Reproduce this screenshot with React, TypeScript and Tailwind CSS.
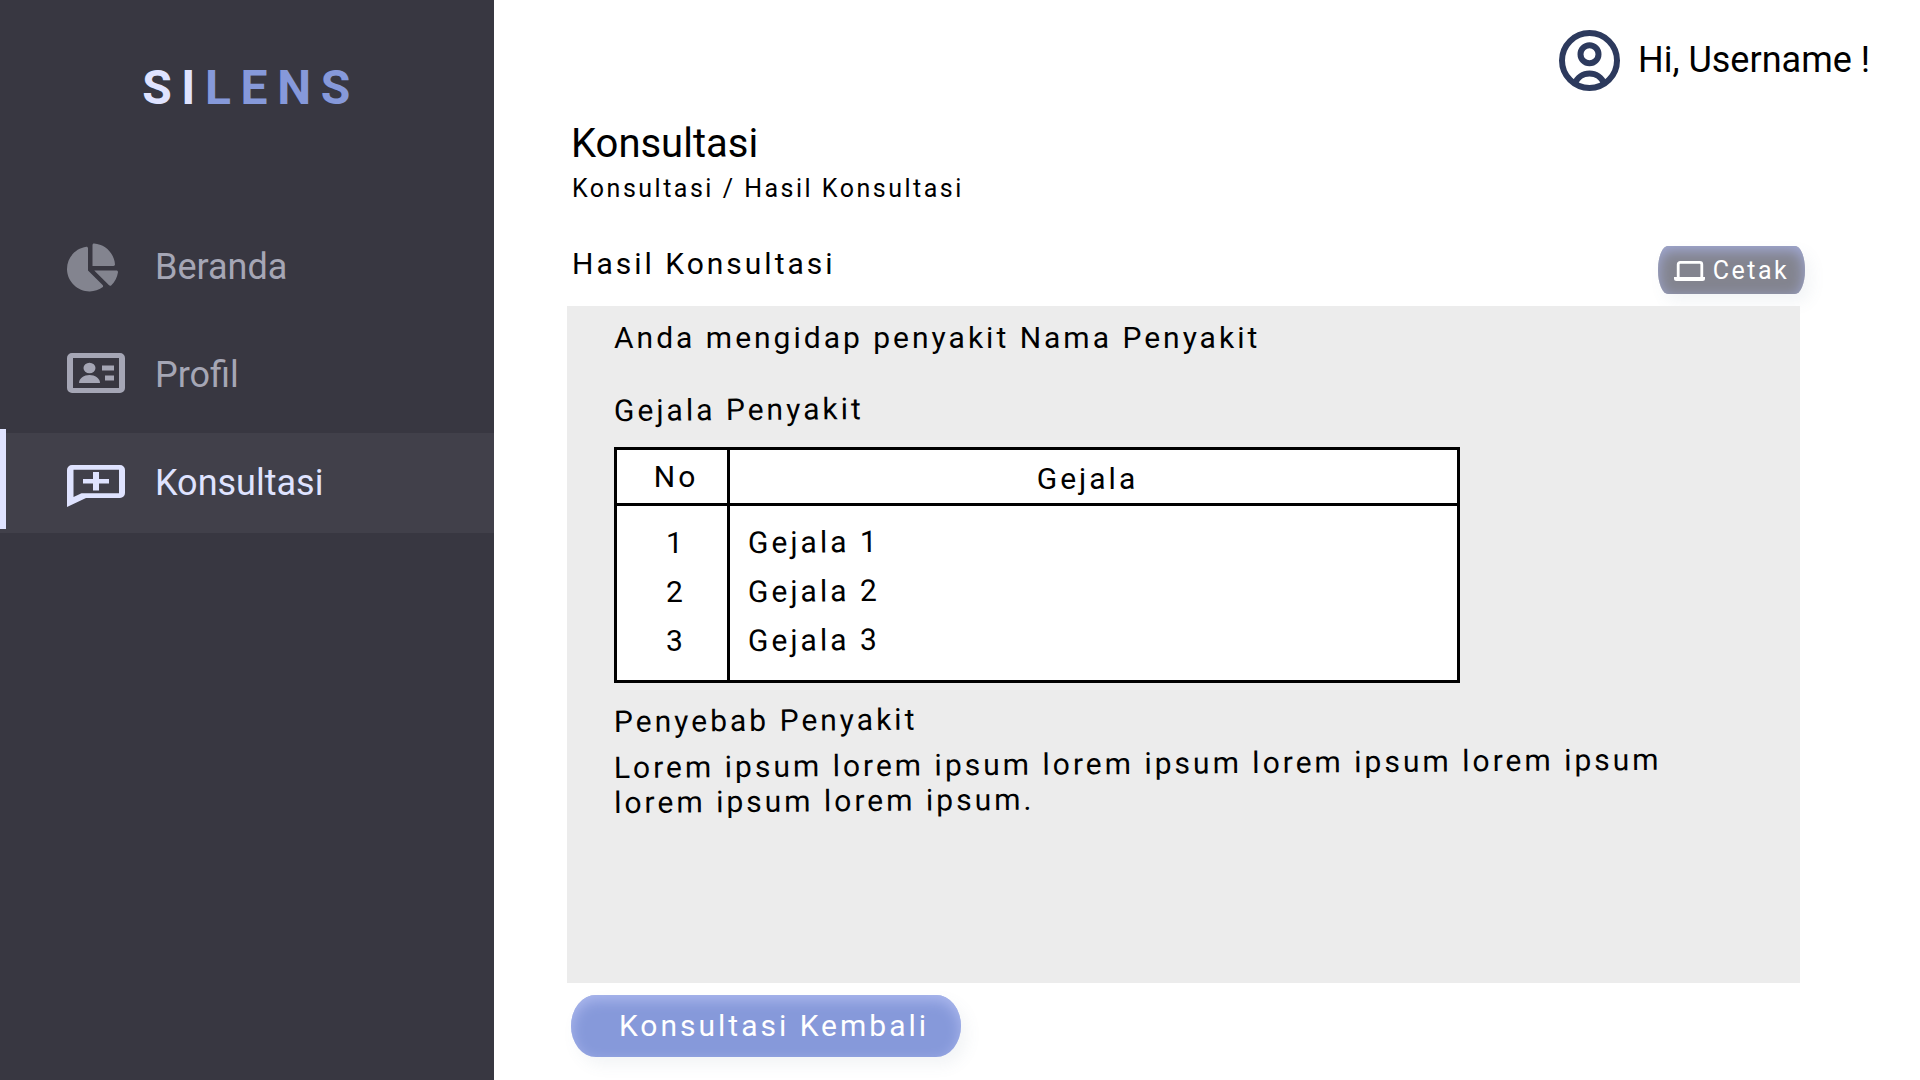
import React from "react";
import { FaChartPie } from "react-icons/fa";

function ProfileIcon() {
  return (
    <svg width="61" height="61" viewBox="0 0 61 61" fill="none" stroke="#2d3a5d" strokeWidth="6" aria-hidden="true">
      <circle cx="30.500" cy="30.500" r="27.500" />
      <circle cx="30.500" cy="24.300" r="9" />
      <path d="M16 53.500A15.500 15.500 0 0 1 45 53.500" />
    </svg>
  );
}

function IdCardIcon() {
  return (
    <svg width="58" height="44" viewBox="0 0 58 44" fill="currentColor" aria-hidden="true">
      <path
        fillRule="evenodd"
        d="M5 0H53a5 5 0 0 1 5 5V35a5 5 0 0 1-5 5H5a5 5 0 0 1-5-5V5a5 5 0 0 1 5-5ZM6 5V35H52V5Z"
      />
      <ellipse cx="22.500" cy="15" rx="6" ry="5.300" />
      <path d="M12 30c0-4.500 5-8 10.500-8S33 25.500 33 30Z" />
      <path d="M35 12.500H47v5H35ZM38 22.500H47v5H38Z" />
    </svg>
  );
}

function ChatPlusIcon() {
  return (
    <svg width="58" height="48" viewBox="0 -6 58 48" fill="currentColor" aria-hidden="true">
      <path
        fillRule="evenodd"
        d="M5 0H53a5 5 0 0 1 5 5V28a5 5 0 0 1-5 5H19L0 42V5a5 5 0 0 1 5-5ZM6.500 4.800V32L14.500 28.200H52V4.800Z"
      />
      <path d="M26 7h6v7h10v4.600H32V25.500H26V18.600H16V14H26Z" />
    </svg>
  );
}

function LaptopIcon() {
  return (
    <svg width="31" height="20" viewBox="0 0 31 20" aria-hidden="true">
      <rect x="4.200" y="1.400" width="23.600" height="16" rx="2" fill="none" stroke="currentColor" strokeWidth="2.800" />
      <path fill="currentColor" d="M0 16H31v1.500a2.500 2.500 0 0 1-2.500 2.500H2.500A2.500 2.500 0 0 1 0 17.500Z" />
    </svg>
  );
}

const navItems = [
  { label: "Beranda", icon: <FaChartPie size={51} className="text-[#83848f]" />, active: false },
  { label: "Profil", icon: <IdCardIcon />, active: false },
  { label: "Konsultasi", icon: <ChatPlusIcon />, active: true },
];

const symptoms = ["Gejala 1", "Gejala 2", "Gejala 3"];

function Sidebar() {
  return (
    <aside className="w-[494px] shrink-0 bg-[#383741]">
      <div className="flex h-[217px] justify-center pt-14 pl-2 text-5xl leading-[64px] font-bold tracking-[0.2em]">
        <span className="text-[#dfe3ff]">SI</span>
        <span className="text-[#8699da]">LENS</span>
      </div>
      <nav className="flex flex-col gap-2">
        {navItems.map((item) => (
          <a
            key={item.label}
            href="#"
            aria-current={item.active ? "page" : undefined}
            className={
              item.active
                ? "relative flex h-[100px] items-center bg-[#41404a] pl-[67px] text-4xl text-[#dfe3ff]"
                : "relative flex h-[100px] items-center pl-[67px] text-4xl text-[#a5a6b5]"
            }
          >
            {item.active && <span className="absolute -top-1 left-0 h-[100px] w-1.5 bg-[#dfe3ff]" />}
            <span className="w-[88px]">{item.icon}</span>
            {item.label}
          </a>
        ))}
      </nav>
    </aside>
  );
}

function SymptomTable() {
  return (
    <table className="mt-[18px] w-[846px] max-w-full border-collapse border-[3px] border-black bg-white">
      <thead>
        <tr className="h-14 border-b-[3px] border-black">
          <th className="w-[113px] border-r-[3px] border-black pl-2 font-normal">No</th>
          <th className="pt-1 pr-3 font-normal">Gejala</th>
        </tr>
      </thead>
      <tbody>
        <tr className="h-[14px]">
          <td className="border-r-[3px] border-black" />
          <td />
        </tr>
        {symptoms.map((name, i) => (
          <tr key={name} className="h-[49px]">
            <td className="border-r-[3px] border-black pl-2 text-center">{i + 1}</td>
            <td className="pl-[18px]">
              <span className="inline-block origin-left -rotate-[0.45deg]">{name}</span>
            </td>
          </tr>
        ))}
        <tr className="h-4">
          <td className="border-r-[3px] border-black" />
          <td />
        </tr>
      </tbody>
    </table>
  );
}

export default function App() {
  return (
    <div className="flex min-h-screen bg-white font-[Roboto,sans-serif] text-black">
      <Sidebar />
      <main className="flex min-w-0 flex-1 flex-col pb-[23px] pl-[73px]">
        <header className="flex h-[120px] items-center justify-end gap-[18px] pr-[50px] text-4xl">
          <ProfileIcon />
          <span>Hi, Username !</span>
        </header>

        <div className="flex flex-1 flex-col pr-[120px]">
          <h1 className="pl-1 text-[40px] leading-12">Konsultasi</h1>
          <p className="mt-[5px] pl-[5px] text-[25px] leading-8 tracking-[0.1em]">Konsultasi / Hasil Konsultasi</p>

          <div className="mt-[39px] flex h-[62px] justify-between pl-[5px] text-[30px] tracking-[0.1em]">
            <h2 className="leading-10">Hasil Konsultasi</h2>
            <button
              type="button"
              className="-mr-[5px] mt-0.5 flex h-12 w-[147px] items-center justify-center gap-2 rounded-[10px/24px] bg-[#83848f] pt-0.5 text-[25px] tracking-[0.1em] text-white shadow-[inset_0_4px_14px_#a3abd8,6px_8px_16px_#5a6f8f14]"
            >
              <LaptopIcon />
              Cetak
            </button>
          </div>

          <section className="flex-1 bg-[#ececec] pl-[47px] text-[30px] leading-9 tracking-[0.1em]">
            <p className="pt-[14px]">Anda mengidap penyakit Nama Penyakit</p>
            <h3 className="mt-[37px] w-fit origin-left -rotate-[0.45deg]">Gejala Penyakit</h3>
            <SymptomTable />
            <h3 className="mt-[21px] w-fit origin-left -rotate-[0.45deg]">Penyebab Penyakit</h3>
            <p className="mt-[10px] w-[1070px] max-w-full origin-left -rotate-[0.45deg] leading-[35px]">
              Lorem ipsum lorem ipsum lorem ipsum lorem ipsum lorem ipsum lorem ipsum lorem ipsum.
            </p>
          </section>

          <button
            type="button"
            className="mt-3 ml-1 h-[62px] w-[390px] rounded-[25px/31px] bg-[#8699da] pb-0.5 pl-4 text-[30px] tracking-[0.1em] text-white shadow-[inset_0_5px_14px_#adb9ee,6px_8px_16px_#5a6f8f14]"
          >
            Konsultasi Kembali
          </button>
        </div>
      </main>
    </div>
  );
}
